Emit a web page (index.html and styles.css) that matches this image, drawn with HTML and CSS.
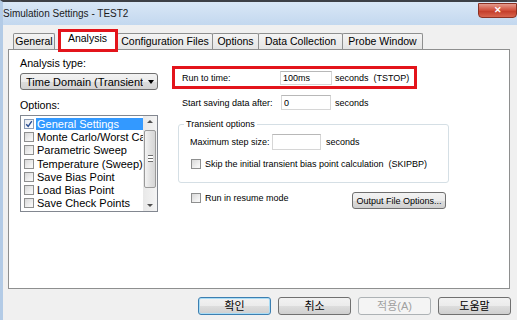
FILE: index.html
```html
<!DOCTYPE html>
<html lang="ko">
<head>
    <meta charset="UTF-8">
    <meta name="viewport" content="width=device-width, initial-scale=1.0">
    <title>Simulation Settings - TEST2</title>
    <link rel="stylesheet" href="styles.css">
</head>
<body>
    <div class="window">
        <div class="titlebar">
            <span class="title">Simulation Settings - TEST2</span>
            <button class="close">&#x2715;</button>
        </div>

        <div class="dialog">
            <div class="tabs">
                <div class="tab tab-general">General</div>
                <div class="tab active">Analysis</div>
                <div class="tab tab-config">Configuration Files</div>
                <div class="tab tab-options">Options</div>
                <div class="tab tab-data">Data Collection</div>
                <div class="tab tab-probe">Probe Window</div>
            </div>

            <div class="panel">
                <!-- left column -->
                <div class="left">
                    <div class="label">Analysis type:</div>
                    <div class="combo">
                        <span class="combo-text">Time Domain (Transient)</span>
                        <span class="combo-arrow"></span>
                    </div>

                    <div class="label options-label">Options:</div>
                    <div class="listbox">
                        <ul class="items">
                            <li>
                                <span class="check checked">
                                    <svg width="8" height="8" viewBox="0 0 8 8"><path d="M1.2 4.2 L3.2 6.3 L6.8 1.2" fill="none" stroke="#2b4f93" stroke-width="1.4"/></svg>
                                </span>
                                <span class="item-text selected">General Settings</span>
                            </li>
                            <li><span class="check"></span><span class="item-text">Monte Carlo/Worst Case</span></li>
                            <li><span class="check"></span><span class="item-text">Parametric Sweep</span></li>
                            <li><span class="check"></span><span class="item-text">Temperature (Sweep)</span></li>
                            <li><span class="check"></span><span class="item-text">Save Bias Point</span></li>
                            <li><span class="check"></span><span class="item-text">Load Bias Point</span></li>
                            <li><span class="check"></span><span class="item-text">Save Check Points</span></li>
                        </ul>
                        <div class="scrollbar">
                            <div class="scroll-btn"><span class="tri-up"></span></div>
                            <div class="track">
                                <div class="thumb"><span class="grip"></span></div>
                            </div>
                            <div class="scroll-btn"><span class="tri-down"></span></div>
                        </div>
                    </div>
                </div>

                <!-- right column -->
                <div class="right">
                    <div class="row run-row">
                        <span class="field-label run-label">Run to time:</span>
                        <input class="textbox run-box" type="text" value="100ms">
                        <span class="unit">seconds&nbsp;&nbsp;(TSTOP)</span>
                    </div>

                    <div class="row save-row">
                        <span class="field-label save-label">Start saving data after:</span>
                        <input class="textbox save-box" type="text" value="0">
                        <span class="unit">seconds</span>
                    </div>

                    <fieldset class="group">
                        <legend>Transient options</legend>
                        <div class="row step-row">
                            <span class="field-label step-label">Maximum step size:</span>
                            <input class="textbox step-box" type="text" value="">
                            <span class="unit step-unit">seconds</span>
                        </div>
                        <div class="row check-row">
                            <span class="check"></span>
                            <span class="check-text">Skip the initial transient bias point calculation&nbsp;&nbsp;(SKIPBP)</span>
                        </div>
                    </fieldset>

                    <div class="row resume-row">
                        <span class="check"></span>
                        <span class="check-text">Run in resume mode</span>
                        <button class="btn output-btn">Output File Options...</button>
                    </div>
                </div>
            </div>

            <div class="buttons">
                <button class="btn dlg-btn default">확인</button>
                <button class="btn dlg-btn">취소</button>
                <button class="btn dlg-btn" disabled>적용(A)</button>
                <button class="btn dlg-btn">도움말</button>
            </div>
        </div>
    </div>
</body>
</html>
```

FILE: styles.css
```css
body {
    margin: 0;
    width: 517px;
    height: 320px;
    overflow: hidden;
    background-color: #f0f0f0;
    font-family: "Liberation Sans", "Noto Sans CJK KR", sans-serif;
    color: #000;
}

.window {
    height: 320px;
    box-sizing: border-box;
    border-top: 2px solid #3d4046;
    border-left: 3px solid #b3cbe6;
}

/* title bar */
.titlebar {
    height: 23px;
    display: flex;
    justify-content: space-between;
    align-items: flex-start;
    background: linear-gradient(#d9e7f6, #c3d8ef);
}

.title {
    font-size: 10px;
    line-height: 23px;
    color: #1b1b1b;
}

.close {
    width: 39px;
    height: 15px;
    margin-top: 1px;
    padding: 0;
    border: 1px solid #8b3224;
    border-radius: 0 0 4px 4px;
    background: linear-gradient(#e59a8c, #cf4d39 50%, #c23a27 51%, #d8654e);
    color: #fff;
    font-size: 9px;
    font-weight: bold;
    line-height: 13px;
}

/* dialog body */
.dialog {
    padding: 4px 7px 0 5px;
}

.tabs {
    display: flex;
    align-items: flex-end;
    height: 20px;
    padding-left: 5px;
}

.tab {
    height: 16px;
    box-sizing: border-box;
    margin-right: -1px;
    border: 1px solid #8e8f8f;
    border-bottom: none;
    border-radius: 2px 2px 0 0;
    background: linear-gradient(#f4f4f4, #e4e4e4);
    font-size: 10.5px;
    line-height: 15px;
    text-align: center;
    white-space: nowrap;
}

.tab-general { width: 42px; margin-right: 0; }
.tab-config { width: 96px; }
.tab-options { width: 47px; }
.tab-data { width: 85px; }
.tab-probe { width: 81px; }

.tab.active {
    position: relative;
    z-index: 1;
    width: 59px;
    height: 21px;
    margin: 0 0 -1px 3px;
    background: #fff;
    line-height: 17px;
}

.tab.active::after {
    content: "";
    position: absolute;
    left: -1px;
    right: -2px;
    top: -1px;
    bottom: -2px;
    border: 3px solid #e3141b;
}

.panel {
    height: 240px;
    box-sizing: border-box;
    display: flex;
    padding: 7px 0 0 11px;
    border: 1px solid #8e8f8f;
    background: #fff;
}

/* left column */
.left {
    width: 138px;
    flex-shrink: 0;
}

.label {
    font-size: 10.7px;
    line-height: 13px;
}

.options-label {
    margin-top: 9px;
}

.combo {
    height: 17px;
    box-sizing: border-box;
    margin-top: 3px;
    display: flex;
    align-items: center;
    padding-left: 5px;
    border: 1px solid #707070;
    border-radius: 3px;
    background: linear-gradient(#f2f2f2, #ebebeb 50%, #dddddd 51%, #d3d3d3);
    font-size: 11px;
}

.combo-text {
    width: 117px;
    overflow: hidden;
    white-space: nowrap;
}

.combo-arrow {
    margin-left: 5px;
    border-left: 3.5px solid transparent;
    border-right: 3.5px solid transparent;
    border-top: 4px solid #000;
}

.listbox {
    height: 97px;
    box-sizing: border-box;
    margin-top: 3px;
    display: flex;
    border: 1px solid #828790;
}

.items {
    flex: 1;
    min-width: 0;
    margin: 0;
    padding: 1px 0 0 3px;
    list-style: none;
    overflow: hidden;
    font-size: 11px;
}

.items li {
    height: 13.3px;
    display: flex;
    align-items: center;
    white-space: nowrap;
}

.check {
    width: 10px;
    height: 10px;
    box-sizing: border-box;
    flex-shrink: 0;
    display: flex;
    align-items: center;
    justify-content: center;
    border: 1px solid #8e8f8f;
    background: linear-gradient(135deg, #d8d8d8, #f6f6f6 80%);
}

.check.checked {
    border-color: #8a9bb5;
    background: linear-gradient(135deg, #e6eaf0, #ffffff);
}

.items .check {
    margin-right: 2px;
}

.item-text {
    flex: 1;
    padding-left: 1px;
    line-height: 12px;
    overflow: hidden;
}

.item-text.selected {
    background: #3399ff;
    color: #fff;
}

.scrollbar {
    width: 14px;
    flex-shrink: 0;
    display: flex;
    flex-direction: column;
    background: linear-gradient(90deg, #e8e8e8, #f4f4f4);
}

.scroll-btn {
    height: 14px;
    display: flex;
    align-items: center;
    justify-content: center;
}

.tri-up {
    border-left: 3px solid transparent;
    border-right: 3px solid transparent;
    border-bottom: 3px solid #505050;
}

.tri-down {
    border-left: 3px solid transparent;
    border-right: 3px solid transparent;
    border-top: 3px solid #505050;
}

.track {
    flex: 1;
    padding: 2px 1px 12px;
}

.thumb {
    height: 56px;
    display: flex;
    align-items: center;
    justify-content: center;
    border: 1px solid #9a9a9a;
    border-radius: 2px;
    background: linear-gradient(90deg, #f3f3f3, #e2e2e2 50%, #d6d6d6);
}

.grip {
    width: 5px;
    height: 5px;
    border-top: 1px solid #6e6e6e;
    border-bottom: 1px solid #6e6e6e;
    background: linear-gradient(#fff 2px, #6e6e6e 2px, #6e6e6e 3px, #fff 3px);
}

/* right column */
.right {
    flex: 1;
    padding-left: 14px;
    font-size: 9px;
}

.row {
    display: flex;
    align-items: center;
    white-space: nowrap;
}

.run-row {
    width: 245px;
    height: 23px;
    box-sizing: border-box;
    margin-top: 9px;
    padding-left: 7px;
    border: 3px solid #e3141b;
}

.run-label {
    width: 98px;
}

.textbox {
    box-sizing: border-box;
    padding: 0 2px;
    margin: 0;
    border: 1px solid #d6d6d6;
    border-top-color: #b8b8b8;
    background: #fff;
    font: inherit;
    color: #000;
}

.run-box {
    width: 52px;
    height: 14px;
}

.unit {
    margin-left: 3px;
}

.save-row {
    height: 15px;
    margin-top: 6px;
    padding-left: 10px;
}

.save-label {
    width: 99px;
}

.save-box {
    width: 50px;
    height: 15px;
}

.save-row .unit {
    margin-left: 4px;
}

.group {
    width: 271px;
    box-sizing: border-box;
    margin: 9px 0 0 6px;
    padding: 0 0 12px 5px;
    border: 1px solid #d5dfe5;
    border-radius: 3px;
}

.group legend {
    padding: 0 2px;
    line-height: 11px;
}

.step-row {
    height: 16px;
    margin-top: 4px;
    padding-left: 6px;
}

.step-label {
    width: 82px;
}

.step-box {
    width: 49px;
    height: 16px;
}

.step-unit {
    margin-left: 5px;
}

.check-row {
    height: 12px;
    margin-top: 8px;
    padding-left: 7px;
}

.check-text {
    margin-left: 4px;
}

.resume-row {
    width: 274px;
    height: 17px;
    margin-top: 9px;
    padding-left: 19px;
    box-sizing: border-box;
    align-items: flex-start;
}

.resume-row .check {
    margin-top: 1px;
}

.resume-row .check-text {
    line-height: 12px;
}

.btn {
    padding: 0;
    border: 1px solid #707070;
    border-radius: 3px;
    background: linear-gradient(#f2f2f2, #ebebeb 50%, #dddddd 51%, #cfcfcf);
    color: #000;
    font-family: "Liberation Sans", "Noto Sans CJK KR", sans-serif;
}

.output-btn {
    width: 94px;
    height: 17px;
    margin-left: auto;
    font-size: 9px;
}

/* bottom buttons */
.buttons {
    display: flex;
    justify-content: flex-end;
    gap: 7px;
    margin: 8px -1px 0 0;
}

.dlg-btn {
    width: 73px;
    height: 18px;
    font-size: 11px;
    line-height: 16px;
}

.dlg-btn.default {
    border-color: #3c7fb1;
    box-shadow: inset 0 0 0 1px #a9dcf5;
}

.dlg-btn:disabled {
    border-color: #adb2b5;
    background: #f4f4f4;
    color: #a0a0a0;
}
```
